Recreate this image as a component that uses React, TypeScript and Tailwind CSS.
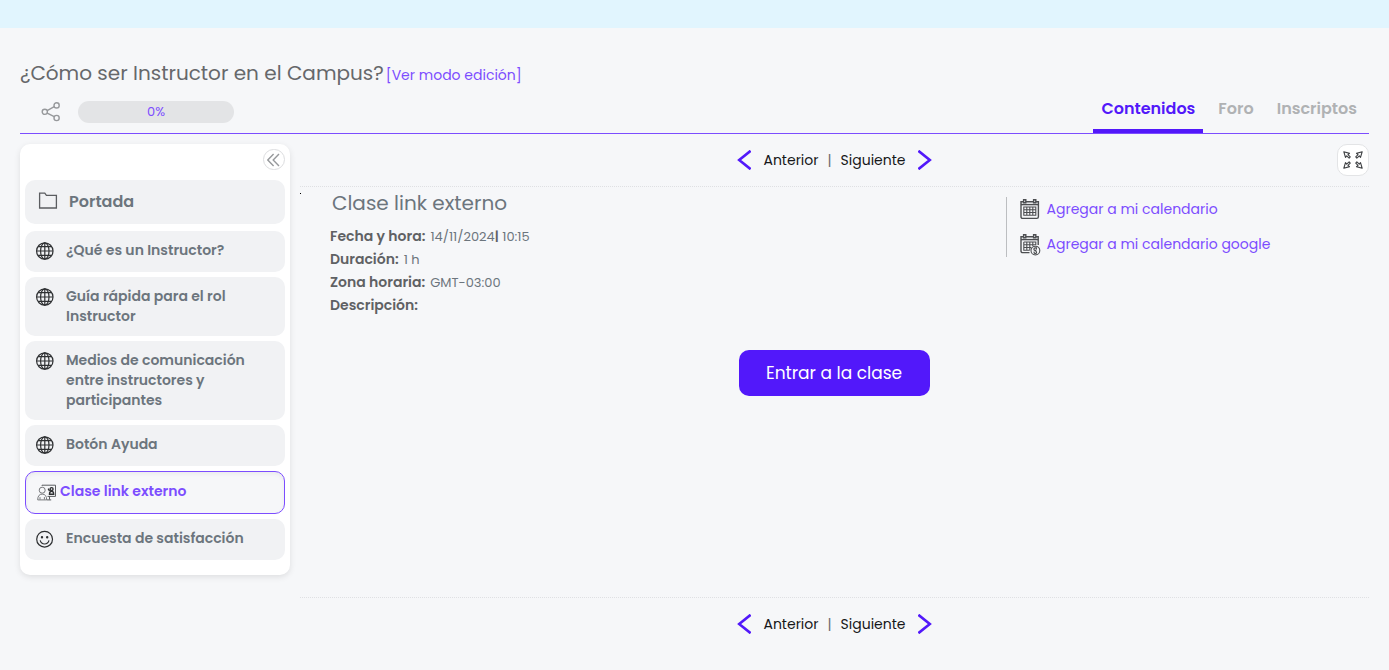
import { useState } from 'react'
import type { ReactNode } from 'react'

type IconName = 'globe' | 'class' | 'smile'

interface Item {
  id: string
  title: string
  icon: IconName
}

const items: Item[] = [
  { id: 'que-es', title: '¿Qué es un Instructor?', icon: 'globe' },
  { id: 'guia', title: 'Guía rápida para el rol Instructor', icon: 'globe' },
  { id: 'medios', title: 'Medios de comunicación entre instructores y participantes', icon: 'globe' },
  { id: 'ayuda', title: 'Botón Ayuda', icon: 'globe' },
  { id: 'clase', title: 'Clase link externo', icon: 'class' },
  { id: 'encuesta', title: 'Encuesta de satisfacción', icon: 'smile' },
]

const tabs = ['Contenidos', 'Foro', 'Inscriptos']

function ShareIcon() {
  return (
    <svg className="w-5 h-5 text-[#97999c]" viewBox="0 0 20 20" fill="none" stroke="currentColor" strokeWidth={1.4}>
      <circle cx="3.8" cy="9.8" r="2.6" />
      <circle cx="15.6" cy="3.4" r="2.6" />
      <circle cx="15.6" cy="16" r="2.6" />
      <path d="M6.2 8.6 13.2 4.7M6.2 11.1l7 3.6" />
    </svg>
  )
}

function FolderIcon() {
  return (
    <svg className="w-5 h-5 shrink-0 text-[#5b5d60]" viewBox="0 0 20 20" fill="none" stroke="currentColor" strokeWidth={1.3}>
      <path d="M1.6 1.2h5.2l1.6 2.1h10v12.7H1.6z" />
    </svg>
  )
}

function GlobeIcon() {
  return (
    <svg className="w-[18px] h-[18px]" viewBox="0 0 18 18" fill="none" stroke="currentColor" strokeWidth={1.2}>
      <circle cx="8.8" cy="9" r="8.2" />
      <ellipse cx="8.8" cy="9" rx="4.2" ry="8.2" />
      <path d="M8.8.8v16.4M.6 9H17M2.1 4.7h13.4M2.1 13.3h13.4" />
    </svg>
  )
}

function SmileIcon() {
  return (
    <svg className="w-[18px] h-[18px]" viewBox="0 0 18 18" fill="none" stroke="currentColor" strokeWidth={1.2}>
      <circle cx="8.6" cy="9.2" r="7.9" />
      <path d="M4.2 10.4c.6 2.3 2.3 3.6 4.4 3.6s3.8-1.3 4.4-3.6" />
      <circle cx="6" cy="7.3" r=".6" fill="currentColor" />
      <circle cx="11.2" cy="7.3" r=".6" fill="currentColor" />
    </svg>
  )
}

function ClassIcon() {
  return (
    <svg className="w-5 h-[18px]" viewBox="0 0 20 18" fill="none" stroke="currentColor" strokeWidth={1}>
      <path d="M5 2.9V2.2h13.5v11.2H10.5" stroke="#5b5d60" />
      <path d="M12.5 13.3v3.2M9.8 16.9h4.4" stroke="#5b5d60" />
      <circle cx="5.2" cy="7.2" r="3" stroke="#77797c" />
      <path d="M.7 16.9c0-3.8 1.6-5.8 4.5-5.8s4.5 2 4.5 5.8zM3 16.5v-2.4M7.4 16.5v-2.4" stroke="#77797c" />
      <circle cx="14.6" cy="6.1" r="1.5" strokeWidth={1.4} />
      <path d="M12.5 11.3c0-2.3.7-3 2.1-3s2.1.7 2.1 3zM11.2 5.7l1.3 2.3" strokeWidth={1.4} />
    </svg>
  )
}

function CalendarIcon({ google }: { google?: boolean }) {
  return (
    <svg className="w-5 h-[22px] shrink-0 overflow-visible text-[#4d4f52]" viewBox="0 0 20 22" fill="none" stroke="currentColor" strokeWidth={1.4}>
      <path d={google ? 'M9.5 19.6H2.6A1.6 1.6 0 0 1 1 18V3.8h17.2V12' : 'M1 3.8h17.4v15a1.6 1.6 0 0 1-1.6 1.6H2.6A1.6 1.6 0 0 1 1 18.8z'} />
      <path d="M1 6.6h17.2" />
      <path d="M3.6 1.8h2.2v3H3.6zM13.6 1.8h2.2v3h-2.2z" fill="#f6f7f9" />
      <path d={google ? 'M3.8 9h12v3.2M3.8 9v8.2h6M3.8 11.7h12M3.8 14.5h7.5M6.8 9v8.2M9.8 9v7.7M12.8 9v4' : 'M3.8 9h12v8.2h-12zM3.8 11.7h12M3.8 14.5h12M6.8 9v8.2M9.8 9v8.2M12.8 9v8.2'} strokeWidth={1.1} />
      {google && (
        <>
          <circle cx="15.4" cy="17.6" r="4.4" fill="#f6f7f9" strokeWidth={1.1} />
          <path d="M17 14.9h-1.6a1.3 1.3 0 1 0 .3 2.5l.3 1a1.2 1.2 0 1 1-1.6.2M16.4 15v1.5" strokeWidth={1.2} />
        </>
      )}
    </svg>
  )
}

// One arrow drawn towards the top left, reused for the four corners
function CompressIcon() {
  const arrow = 'M1 1l6.2 1.8-1.7 1.4L8 6.6 6.8 8 4.1 5.5 2.8 7.2z'
  return (
    <svg className="w-[22px] h-[22px] text-[#3f4144]" viewBox="0 0 24 24" fill="none" stroke="currentColor" strokeWidth={1.2} strokeLinejoin="round">
      <path d={arrow} transform="translate(1 2)" />
      <path d={arrow} transform="matrix(-1 0 0 1 23 2)" />
      <path d={arrow} transform="matrix(1 0 0 -1 1 22)" />
      <path d={arrow} transform="matrix(-1 0 0 -1 23 22)" />
    </svg>
  )
}

function ItemIcon({ name }: { name: IconName }) {
  if (name === 'class') return <ClassIcon />
  if (name === 'smile') return <SmileIcon />
  return <GlobeIcon />
}

function Pager() {
  return (
    <nav className="flex items-center justify-center h-[52px] text-sm leading-5 text-[#17181a]">
      <button className="flex items-center gap-3">
        <svg className="w-[14px] h-5 text-[#5218fa]" viewBox="0 0 14 20" fill="none" stroke="currentColor" strokeWidth={2.6}>
          <path d="M13.6.8 2.2 10l11.4 9.2" />
        </svg>
        Anterior
      </button>
      <span className="px-[9px] text-[#6b6d70]">|</span>
      <button className="flex items-center gap-3">
        Siguiente
        <svg className="w-[14px] h-5 text-[#5218fa]" viewBox="0 0 14 20" fill="none" stroke="currentColor" strokeWidth={2.6}>
          <path d="M.4.8 11.8 10 .4 19.2" />
        </svg>
      </button>
    </nav>
  )
}

function Detail({ label, children }: { label: string; children?: ReactNode }) {
  return (
    <div className="flex gap-[5px]">
      <dt className="font-semibold text-sm leading-[23px] text-[#5f6164]">{label}</dt>
      <dd className="text-[13px] leading-[23px]">{children}</dd>
    </div>
  )
}

export default function App() {
  const [tab, setTab] = useState('Contenidos')
  const [current, setCurrent] = useState('clase')
  const [collapsed, setCollapsed] = useState(false)

  return (
    <div className="min-h-screen bg-[#f6f7f9] font-['Poppins',Inter,sans-serif] text-[#6c757d]">
      <div className="h-7 bg-[#e1f5fe]" />

      <div className="px-5 pt-[31px]">
        <header className="border-b border-[#7c4dff]">
          <div className="flex items-baseline gap-[2px]">
            <h1 className="text-xl leading-7 text-[#66686b]">¿Cómo ser Instructor en el Campus?</h1>
            <a href="#edicion" className="text-sm text-[#7c4dff]">[Ver modo edición]</a>
          </div>
          <div className="flex items-end justify-between pt-[6px]">
            <div className="flex items-center gap-[17px] pl-[21px] pb-[10px]">
              <button title="Compartir"><ShareIcon /></button>
              <div className="w-[156px] h-[22px] rounded-full bg-[#e3e4e6] text-center text-[13px] leading-[22px] text-[#7c4dff]">0%</div>
            </div>
            <nav className="flex pr-1">
              {tabs.map(t => (
                <button
                  key={t}
                  onClick={() => setTab(t)}
                  className={`px-2 pt-1 pb-2 mr-[7px] last:mr-0 border-b-4 text-base leading-6 font-semibold ${t === tab ? 'border-[#5218fa] text-[#5218fa]' : 'border-transparent text-[#b0b2b4]'}`}
                >
                  {t}
                </button>
              ))}
            </nav>
          </div>
        </header>

        <div className="flex items-start gap-[10px]">
          <aside className={`shrink-0 mt-[10px] px-[5px] pt-[5px] rounded-[10px] bg-white shadow-[0_2px_6px_rgba(0,0,0,0.1)] ${collapsed ? 'w-8 pb-2' : 'w-[270px] pb-[15px]'}`}>
            <div className="flex justify-end pb-[10px]">
              <button
                title="Contraer menú"
                onClick={() => setCollapsed(!collapsed)}
                className="flex items-center justify-center w-[22px] h-[21px] rounded-full border border-[#dcdddf] text-[#97999c]"
              >
                <svg className="w-[14px] h-[14px]" viewBox="0 0 14 14" fill="none" stroke="currentColor" strokeWidth={1.4}>
                  <path d="M6.6 1 .8 7l5.8 6M12 1 6.2 7l5.8 6" />
                </svg>
              </button>
            </div>
            {!collapsed && (
              <>
                <button className="flex items-center w-full h-11 gap-[11px] px-[13px] mb-[7px] rounded-[10px] bg-[#f1f2f4] text-base leading-6 font-semibold">
                  <FolderIcon />
                  Portada
                </button>
                <ul className="flex flex-col gap-[5px]">
                  {items.map(item => {
                    const active = item.id === current
                    return (
                      <li key={item.id}>
                        <button
                          onClick={() => setCurrent(item.id)}
                          className={`flex items-start w-full pl-[11px] pr-6 pt-[9px] pb-[10px] rounded-[10px] text-left text-sm leading-5 font-semibold ${active ? 'min-h-[43px] border border-[#7c4dff] bg-[#f6f7f9] text-[#7c4dff] shadow-inner' : 'min-h-[41px] bg-[#f1f2f4]'}`}
                        >
                          <span className={`shrink-0 pt-[2px] text-[#2e3032] ${item.icon === 'class' ? 'w-[23px]' : 'w-[30px]'}`}>
                            <ItemIcon name={item.icon} />
                          </span>
                          <span>{item.title}</span>
                        </button>
                      </li>
                    )
                  })}
                </ul>
              </>
            )}
          </aside>

          <main className="flex-1 min-w-0">
            <div className="relative border-b border-dotted border-[#dfe0e3]">
              <Pager />
              <button
                title="Pantalla completa"
                className="absolute right-0 top-[10px] flex items-center justify-center w-8 h-8 rounded-[10px] border border-[#e3e4e6] bg-white"
              >
                <CompressIcon />
              </button>
            </div>

            <div className="flex justify-between min-h-[410px]">
              <div className="w-px h-px mt-[6px] shrink-0 bg-black" />
              <section className="flex-1 pl-[29px] pt-[2px]">
                <h2 className="px-[2px] text-xl leading-7">Clase link externo</h2>
                <dl className="pt-2">
                  <Detail label="Fecha y hora:">
                    14/11/2024<b className="font-semibold text-[#5f6164]">|</b> 10:15
                  </Detail>
                  <Detail label="Duración:">1 h</Detail>
                  <Detail label="Zona horaria:">GMT-03:00</Detail>
                  <Detail label="Descripción:" />
                </dl>
                <div className="flex justify-end pt-[33px]">
                  <a href="#entrar" className="w-[191px] mr-[76px] rounded-[10px] bg-[#5218fa] py-[11px] text-center text-[17px] leading-6 text-white">
                    Entrar a la clase
                  </a>
                </div>
              </section>
              <ul className="self-start w-[34%] h-[60px] mt-[10px] pl-[13px] border-l border-[#bcbec1]">
                <li className="pb-[11px]">
                  <a href="#calendario" className="flex items-center gap-[7px] h-6 text-sm text-[#7c4dff]">
                    <CalendarIcon />
                    Agregar a mi calendario
                  </a>
                </li>
                <li>
                  <a href="#calendario-google" className="flex items-center gap-[7px] h-6 text-sm text-[#7c4dff]">
                    <CalendarIcon google />
                    Agregar a mi calendario google
                  </a>
                </li>
              </ul>
            </div>

            <div className="border-t border-dotted border-[#dfe0e3]">
              <Pager />
            </div>
          </main>
        </div>
      </div>
    </div>
  )
}
